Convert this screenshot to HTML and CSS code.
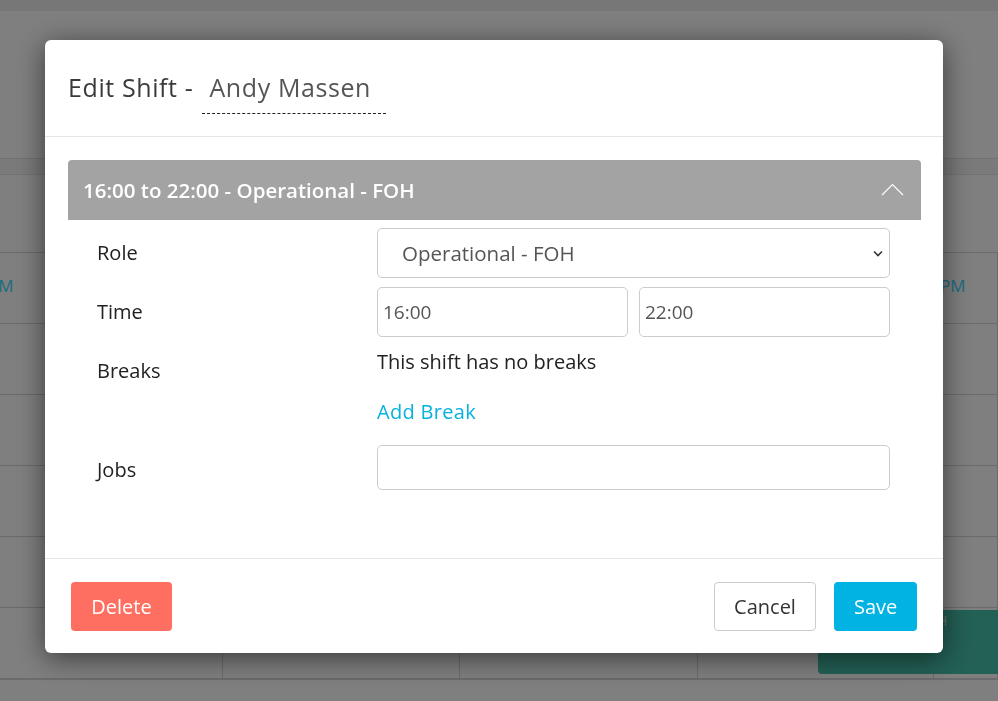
FILE: index.html
```html
<!DOCTYPE html>
<html lang="en">
<head>
<meta charset="utf-8">
<title>Edit Shift</title>
<link rel="stylesheet" href="styles.css">
</head>
<body>
  <!-- schedule page behind the dialog -->
  <div class="schedule">
    <div class="sched-top"></div>
    <div class="sched-toolbar"></div>
    <div class="sched-band"></div>
    <div class="sched-grid">
      <div class="cell head"></div><div class="cell head"></div><div class="cell head"></div><div class="cell head"></div><div class="cell head"></div>
      <div class="cell hour"><span class="hour-label shifted">PM</span></div>
      <div class="cell hour"><span class="hour-label">12 PM</span></div>
      <div class="cell hour"><span class="hour-label">2 PM</span></div>
      <div class="cell hour"><span class="hour-label">4 PM</span></div>
      <div class="cell hour"><span class="hour-label">PM</span></div>
      <div class="cell"></div><div class="cell"></div><div class="cell"></div><div class="cell"></div><div class="cell"></div>
      <div class="cell"></div><div class="cell"></div><div class="cell"></div><div class="cell"></div><div class="cell"></div>
      <div class="cell"></div><div class="cell"></div><div class="cell"></div><div class="cell"></div><div class="cell"></div>
      <div class="cell"></div><div class="cell"></div><div class="cell"></div><div class="cell"></div><div class="cell"></div>
      <div class="cell"></div><div class="cell"></div><div class="cell"></div>
      <div class="cell shift-cell"><div class="shift-block"><span class="shift-text">FOH</span></div></div>
      <div class="cell"></div>
      <div class="cell"></div><div class="cell"></div><div class="cell"></div><div class="cell"></div><div class="cell"></div>
    </div>
  </div>

  <div class="backdrop"></div>

  <div class="modal">
    <div class="modal-header">
      <h1 class="modal-title">Edit Shift - <span class="editable-name">Andy Massen</span></h1>
    </div>

    <div class="modal-body">
      <div class="panel">
        <div class="panel-head">
          <span class="panel-title">16:00 to 22:00 - Operational - FOH</span>
          <svg class="chev-up" width="23" height="13" viewBox="0 0 23 13" aria-hidden="true">
            <polyline points="1,12 11.5,1.5 22,12" fill="none" stroke="#fff" stroke-width="1.2"/>
          </svg>
        </div>

        <div class="panel-body">
          <label class="field-label">Role</label>
          <div class="select-wrap">
            <select class="control select">
              <option>Operational - FOH</option>
            </select>
            <svg class="chev-down" width="10" height="7" viewBox="0 0 10 7" aria-hidden="true">
              <polyline points="1,1.5 5,5.5 9,1.5" fill="none" stroke="#333" stroke-width="1.6"/>
            </svg>
          </div>

          <label class="field-label">Time</label>
          <div class="time-pair">
            <input class="control time" type="text" value="16:00">
            <input class="control time" type="text" value="22:00">
          </div>

          <label class="field-label top">Breaks</label>
          <div class="breaks">
            <p class="no-breaks">This shift has no breaks</p>
            <a class="add-break" href="#">Add Break</a>
          </div>

          <label class="field-label low">Jobs</label>
          <input class="control jobs" type="text" value="">
        </div>
      </div>
    </div>

    <div class="modal-footer">
      <button class="btn btn-delete">Delete</button>
      <div class="footer-right">
        <button class="btn btn-cancel">Cancel</button>
        <button class="btn btn-save">Save</button>
      </div>
    </div>
  </div>
</body>
</html>
```

FILE: styles.css
```css
* {
  box-sizing: border-box;
}

html, body {
  margin: 0;
  padding: 0;
  height: 100%;
  overflow: hidden;
}

body {
  background: #fff;
  font-family: "Open Sans", "Liberation Sans", sans-serif;
  color: #222;
}

/* ---------- schedule behind ---------- */
.schedule {
  width: 100%;
}

.sched-top {
  height: 11px;
  background: #eeeeee;
}

.sched-toolbar {
  height: 147px;
  background: #fff;
}

.sched-band {
  height: 17px;
  background: #f4f4f4;
  border-top: 1px solid #e4e4e4;
  border-bottom: 1px solid #e4e4e4;
}

.sched-grid {
  display: grid;
  grid-template-columns: 223px 237px 238px 236px 1fr;
  grid-template-rows: 78px repeat(6, 71px);
}

.cell {
  border-right: 1px solid #d6d6d6;
  border-bottom: 1px solid #d6d6d6;
  position: relative;
}

.cell.head {
  border-right: none;
}

.hour {
  display: flex;
  align-items: center;
  padding-bottom: 6px;
}

.hour-label {
  font-family: "Open Sans", sans-serif;
  font-size: 17px;
  color: #3ad8ff;
  padding-left: 6px;
  white-space: nowrap;
}

.hour-label.shifted {
  margin-left: -12px;
  padding-left: 0;
}

.shift-cell {
  overflow: visible;
}

.shift-block {
  position: absolute;
  left: 120px;
  top: 2px;
  width: 220px;
  height: 64px;
  background: #46c0aa;
  border-radius: 4px;
  color: rgba(255, 255, 255, 0.8);
  font-size: 14px;
  padding: 1px 0 0 101px;
  white-space: nowrap;
  z-index: 1;
}

/* ---------- dialog ---------- */
.backdrop {
  position: fixed;
  inset: 0;
  background: rgba(0, 0, 0, 0.5);
  z-index: 5;
}

.modal {
  position: fixed;
  left: 45px;
  top: 40px;
  width: 898px;
  background: #fff;
  border-radius: 6px;
  box-shadow: 0 5px 28px rgba(0, 0, 0, 0.55);
  z-index: 10;
}

.modal-header {
  height: 97px;
  padding: 29px 23px 0;
  border-bottom: 1px solid #e5e5e5;
}

.modal-title {
  margin: 0;
  font-size: 25px;
  line-height: 36px;
  font-weight: 400;
  letter-spacing: 0.6px;
  color: #3a3a3a;
  white-space: nowrap;
}

.editable-name {
  display: inline-block;
  margin-left: 2px;
  padding: 0 15px 8px 7px;
  color: #555;
  border-bottom: 1px dashed #222;
  vertical-align: top;
}

.modal-body {
  padding: 23px 22px 24px 23px;
}

.panel-head {
  height: 60px;
  background: #a3a3a3;
  border-radius: 4px 4px 0 0;
  display: flex;
  align-items: center;
  justify-content: space-between;
  padding: 0 17px 0 15px;
}

.panel-title {
  color: #fff;
  font-size: 20.5px;
  font-weight: 600;
  line-height: 60px;
  white-space: nowrap;
}

.chev-up {
  margin-top: -2px;
}

.panel-body {
  display: grid;
  grid-template-columns: 280px 1fr;
  row-gap: 9px;
  padding: 8px 31px 44px 29px;
}

.field-label {
  align-self: center;
  font-size: 20px;
  line-height: 32px;
  color: #222;
}

.field-label.top {
  align-self: start;
  margin-top: 9px;
}

.field-label.low {
  margin-top: 4px;
}

.control {
  font-family: "Open Sans", "Liberation Sans", sans-serif;
  border: 1px solid #cccccc;
  border-radius: 5px;
  background: #fff;
  color: #555;
  outline: none;
  margin: 0;
}

.select-wrap {
  position: relative;
}

.select {
  width: 100%;
  height: 50px;
  appearance: none;
  -webkit-appearance: none;
  font-size: 20.5px;
  padding: 0 40px 0 24px;
}

.chev-down {
  position: absolute;
  right: 7px;
  top: 22px;
  pointer-events: none;
}

.time-pair {
  display: grid;
  grid-template-columns: 1fr 1fr;
  column-gap: 11px;
}

.time {
  width: 100%;
  height: 50px;
  font-size: 19px;
  padding: 0 5px;
}

.breaks {
  display: flex;
  flex-direction: column;
  align-items: flex-start;
}

.no-breaks {
  margin: 0;
  font-size: 20px;
  line-height: 32px;
  color: #222;
}

.add-break {
  margin: 18px 0 8px;
  font-size: 20px;
  line-height: 32px;
  letter-spacing: 0.3px;
  color: #07b1e0;
  text-decoration: none;
}

.jobs {
  width: 100%;
  height: 45px;
  font-size: 19px;
  padding: 0 5px;
}

.modal-footer {
  border-top: 1px solid #e5e5e5;
  padding: 23px 26px 22px;
  display: flex;
  justify-content: space-between;
  align-items: center;
}

.footer-right {
  display: flex;
  gap: 18px;
}

.btn {
  font-family: "Open Sans", "Liberation Sans", sans-serif;
  font-size: 20px;
  height: 49px;
  padding: 0 19px;
  border-radius: 4px;
  border: 1px solid transparent;
  cursor: pointer;
  line-height: 1;
}

.btn-delete {
  width: 101px;
  background: #fe6f61;
  color: #fff;
}

.btn-cancel {
  width: 102px;
  background: #fff;
  color: #333;
  border-color: #cccccc;
}

.btn-save {
  width: 83px;
  background: #00b3e3;
  color: #fff;
}
```
